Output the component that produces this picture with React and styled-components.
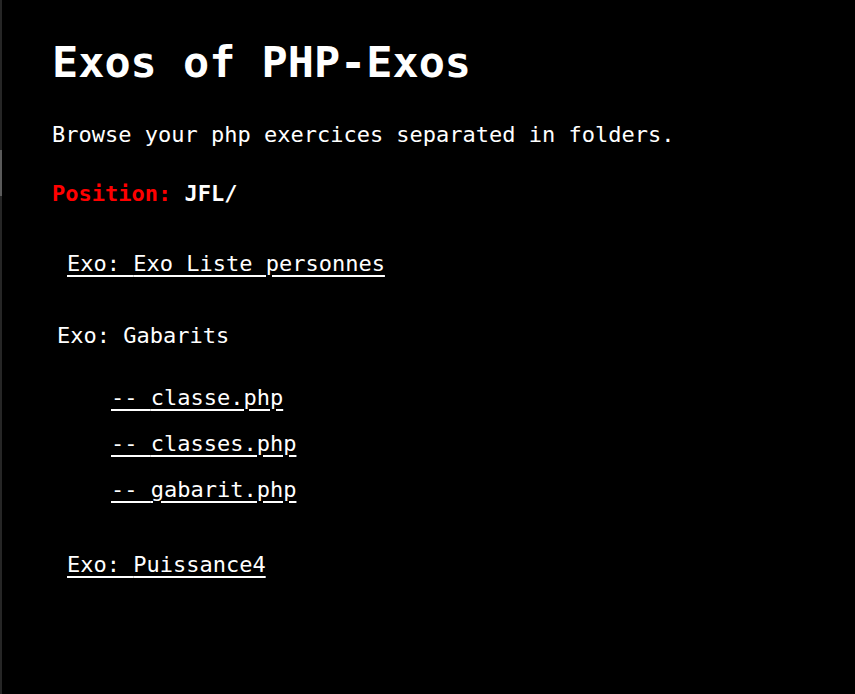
import React from 'react';
import styled, { createGlobalStyle } from 'styled-components';

const GlobalStyle = createGlobalStyle`
    html, body {
        margin: 0;
        padding: 0;
        background: #000;
    }
`

const folders = [
    { name: 'Exo Liste personnes', link: true },
    { name: 'Gabarits', link: false, files: ['classe.php', 'classes.php', 'gabarit.php'] },
    { name: 'Puissance4', link: true },
]

function App() {
    return(
        <>
        <GlobalStyle/>
        <Page>
            <Title>Exos of PHP-Exos</Title>
            <Intro>Browse your php exercices separated in folders.</Intro>
            <Position>
                <Label>Position:</Label> JFL/
            </Position>
            <FolderList>
                {folders.map(folder =>
                    folder.link ?
                        <FolderLink key={folder.name} href='#'>Exo: {folder.name}</FolderLink>
                        :
                        <Folder key={folder.name}>
                            <FolderTitle>Exo: {folder.name}</FolderTitle>
                            <FileList>
                                {folder.files.map(file =>
                                    <FileLink key={file} href='#'>-- {file}</FileLink>
                                )}
                            </FileList>
                        </Folder>
                )}
            </FolderList>
        </Page>
        </>
    )
}

export default App;

const Page = styled.div`
    min-height: 100vh;
    box-sizing: border-box;
    padding: 37px 0 0 52px;
    background:
        linear-gradient(to bottom, #262626 0 150px, #5a5a5a 150px 196px, #262626 196px) left top / 2px 100% no-repeat,
        #000;
    color: #fff;
    font-family: "DejaVu Sans Mono", "Liberation Mono", monospace;
    font-size: 22px;
    line-height: 26px;
    display: flex;
    flex-direction: column;
    align-items: flex-start;
`

const Title = styled.h1`
    margin: 0;
    font-size: 43.5px;
    line-height: 50px;
    font-weight: bold;
`

const Intro = styled.p`
    margin: 35px 0 0;
`

const Position = styled.p`
    margin: 33px 0 0;
    font-weight: bold;
`

const Label = styled.span`
    color: #ff0000;
`

const FolderList = styled.div`
    margin-top: 44px;
    display: flex;
    flex-direction: column;
    align-items: flex-start;
    gap: 44px;
`

const FolderLink = styled.a`
    margin-left: 15px;
    color: #fff;
    text-decoration: underline;
    text-underline-offset: 4px;
    text-decoration-thickness: 2px;
`

const Folder = styled.div`
    display: flex;
    flex-direction: column;
    align-items: flex-start;
    margin: 2px 0 5px;
`

const FolderTitle = styled.span`
    margin-left: 5px;
`

const FileList = styled.div`
    margin-top: 36px;
    display: flex;
    flex-direction: column;
    align-items: flex-start;
    gap: 20px;
`

const FileLink = styled.a`
    margin-left: 59px;
    color: #fff;
    text-decoration: underline;
    text-underline-offset: 4px;
    text-decoration-thickness: 2px;
`
